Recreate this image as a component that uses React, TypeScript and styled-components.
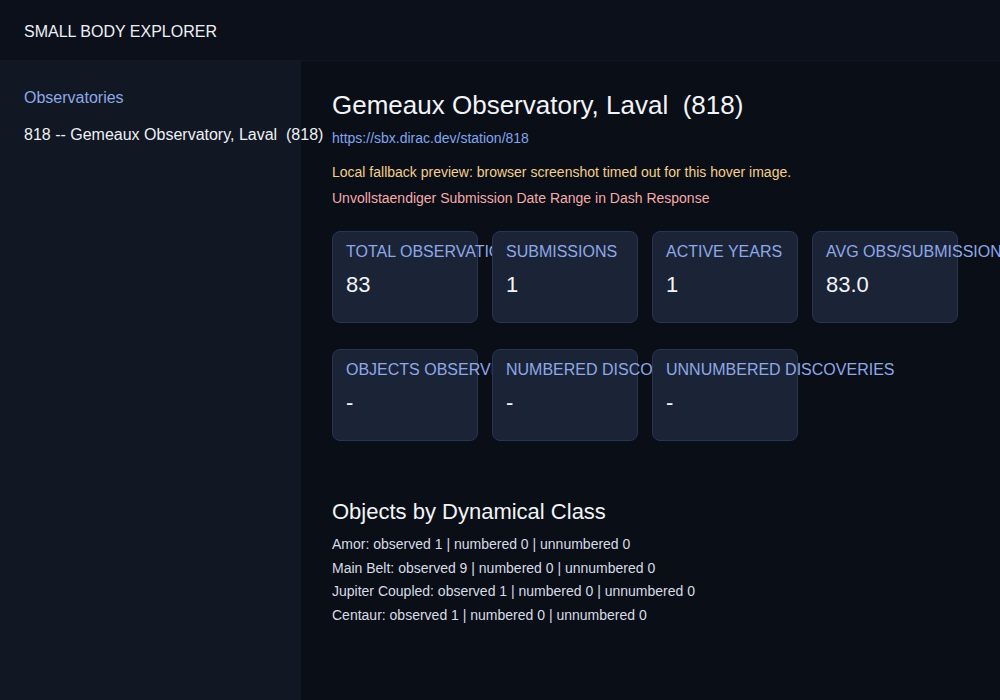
import React from "react";
import styled, { createGlobalStyle } from "styled-components";

const Global = createGlobalStyle`
  html, body { margin: 0; padding: 0; background: #0a0e17; }
  body { font-family: "Liberation Sans", Arial, sans-serif; color: #e8ebf2; }
  * { box-sizing: border-box; }
`;

const Page = styled.div`
  width: 1000px;
  height: 700px;
  display: flex;
  flex-direction: column;
  overflow: hidden;
`;

const Header = styled.header`
  height: 61px;
  flex: none;
  background: #0b101b;
  border-bottom: 1px solid #111723;
  display: flex;
  align-items: center;
  padding: 3px 24px 0;
  font-size: 16px;
  color: #eef0f5;
`;

const Body = styled.div`
  flex: 1;
  display: flex;
  min-height: 0;
`;

const Sidebar = styled.aside`
  position: relative;
  z-index: 1;
  width: 301px;
  flex: none;
  background: #111723;
  padding: 28px 24px;
`;

const SideTitle = styled.div`
  font-size: 16px;
  color: #8ea8e8;
  line-height: 18px;
`;

const SideItem = styled.div`
  margin-top: 19px;
  font-size: 16px;
  line-height: 18px;
  color: #eef0f5;
  white-space: pre;
`;

const Main = styled.main`
  flex: 1;
  background: #0a0e17;
  padding: 29px 31px;
`;

const Title = styled.h1`
  margin: 0;
  font-size: 26px;
  font-weight: 400;
  line-height: 30px;
  color: #f2f4f8;
  white-space: pre;
`;

const Link = styled.a`
  display: block;
  margin-top: 10px;
  font-size: 14px;
  line-height: 16px;
  color: #82a6ee;
  text-decoration: none;
`;

const Note = styled.div<{ $tone: "warn" | "error" }>`
  font-size: 14px;
  line-height: 16px;
  margin-top: ${(p) => (p.$tone === "warn" ? "18px" : "10px")};
  color: ${(p) => (p.$tone === "warn" ? "#f3d08c" : "#f4abab")};
`;

const Row = styled.div<{ $first?: boolean }>`
  display: flex;
  gap: 14px;
  margin-top: ${(p) => (p.$first ? "25px" : "26px")};
`;

const Card = styled.div`
  width: 146px;
  height: 92px;
  flex: none;
  background: #1b2436;
  border: 1px solid #263650;
  border-radius: 8px;
  padding: 11px 13px;
  overflow: visible;
`;

const CardLabel = styled.div`
  font-size: 16px;
  line-height: 18px;
  color: #8ea8e8;
  white-space: nowrap;
`;

const CardValue = styled.div`
  margin-top: 11px;
  font-size: 22px;
  line-height: 25px;
  color: #f2f4f8;
`;

const SectionTitle = styled.h2`
  margin: 58px 0 0;
  font-size: 22px;
  font-weight: 400;
  line-height: 25px;
  color: #f2f4f8;
`;

const List = styled.div`
  margin-top: 12px;
  display: flex;
  flex-direction: column;
  gap: 7.67px;
`;

const ListItem = styled.div`
  font-size: 14px;
  line-height: 16px;
  color: #d7dce6;
`;

const row1 = [
  ["TOTAL OBSERVATIONS", "83"],
  ["SUBMISSIONS", "1"],
  ["ACTIVE YEARS", "1"],
  ["AVG OBS/SUBMISSION", "83.0"],
];
const row2 = [
  ["OBJECTS OBSERVED", "-"],
  ["NUMBERED DISCOVERIES", "-"],
  ["UNNUMBERED DISCOVERIES", "-"],
];

const classes = [
  "Amor: observed 1 | numbered 0 | unnumbered 0",
  "Main Belt: observed 9 | numbered 0 | unnumbered 0",
  "Jupiter Coupled: observed 1 | numbered 0 | unnumbered 0",
  "Centaur: observed 1 | numbered 0 | unnumbered 0",
];

export default function App() {
  return (
    <Page>
      <Global />
      <Header>SMALL BODY EXPLORER</Header>
      <Body>
        <Sidebar>
          <SideTitle>Observatories</SideTitle>
          <SideItem>818 -- Gemeaux Observatory, Laval  (818)</SideItem>
        </Sidebar>
        <Main>
          <Title>Gemeaux Observatory, Laval  (818)</Title>
          <Link href="#">https://sbx.dirac.dev/station/818</Link>
          <Note $tone="warn">Local fallback preview: browser screenshot timed out for this hover image.</Note>
          <Note $tone="error">Unvollstaendiger Submission Date Range in Dash Response</Note>
          <Row $first>
            {row1.map(([l, v]) => (
              <Card key={l}>
                <CardLabel>{l}</CardLabel>
                <CardValue>{v}</CardValue>
              </Card>
            ))}
          </Row>
          <Row>
            {row2.map(([l, v]) => (
              <Card key={l}>
                <CardLabel>{l}</CardLabel>
                <CardValue>{v}</CardValue>
              </Card>
            ))}
          </Row>
          <SectionTitle>Objects by Dynamical Class</SectionTitle>
          <List>
            {classes.map((c) => (
              <ListItem key={c}>{c}</ListItem>
            ))}
          </List>
        </Main>
      </Body>
    </Page>
  );
}
